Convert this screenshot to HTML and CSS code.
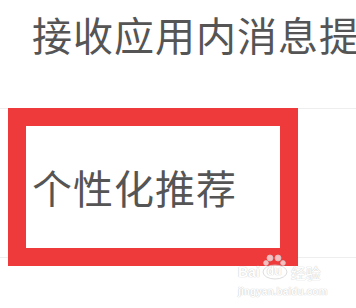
FILE: index.html
```html
<!DOCTYPE html>
<html lang="zh-CN">
<head>
  <meta charset="UTF-8">
  <title>个性化推荐</title>
  <meta name="viewport" content="width=device-width, initial-scale=1">
  <link rel="stylesheet" href="styles.css">
</head>
<body>

<div class="settings">
  <div class="item item-top">
    <span class="label">接收应用内消息提</span>
  </div>
  <div class="item item-main">
    <span class="label">个性化推荐</span>
  </div>

  <!-- annotation box drawn over the list -->
  <div class="mark"></div>

  <div class="watermark">
    <div class="wm-logo">
      <span class="wm-bai">Bai</span>
      <span class="wm-paw">
        <svg width="28" height="26" viewBox="0 0 28 26">
          <circle cx="9" cy="4" r="3"/>
          <circle cx="17" cy="4" r="3"/>
          <circle cx="5" cy="9" r="2.4"/>
          <circle cx="22" cy="9" r="2.4"/>
          <ellipse cx="14" cy="18" rx="12" ry="7"/>
        </svg>
        <span class="wm-du">du</span>
      </span>
      <span class="wm-jy">经验</span>
    </div>
    <div class="wm-url">jingyan.baidu.com</div>
  </div>
</div>

</body>
</html>
```

FILE: styles.css
```css
body {
  margin: 0;
  background-color: #fff;
  font-family: "Noto Sans CJK SC", "Noto Sans", sans-serif;
  color: #555;
  overflow: hidden;
}

.settings {
  position: relative;
  width: 356px;
  height: 308px;
}

.item {
  display: flex;
  padding-left: 32px;
  border-bottom: 1px solid #eee;
  white-space: nowrap;
  overflow: hidden;
}

.label {
  font-size: 40px;
  line-height: 1;
  letter-spacing: 1px;
}

.item-top {
  height: 109px;
  align-items: flex-start;
  padding-top: 14px;
  box-sizing: border-box;
}

.item-main {
  height: 149px;
  align-items: center;
  box-sizing: border-box;
  padding-top: 8px;
}

.mark {
  position: absolute;
  left: 8px;
  top: 108px;
  width: 290px;
  height: 158px;
  box-sizing: border-box;
  border: 18px solid #ef3a3c;
}

/* faint site watermark, bottom right */
.watermark {
  position: absolute;
  left: 238px;
  top: 252px;
  width: 92px;
  color: #fff;
  text-shadow: 0 0 1px #c8c8c8, 0 0 1px #c8c8c8;
  opacity: 0.9;
}

.wm-logo {
  display: flex;
  align-items: flex-end;
  height: 28px;
  font-family: "Liberation Sans", sans-serif;
  font-weight: bold;
  line-height: 1;
}

.wm-bai {
  font-size: 14px;
  margin-bottom: 1px;
}

.wm-paw {
  position: relative;
  width: 28px;
  height: 26px;
  margin-left: 1px;
}

.wm-paw svg {
  display: block;
  fill: rgba(255, 255, 255, 0.75);
  stroke: #d0d0d0;
  stroke-width: 0.8;
}

.wm-du {
  position: absolute;
  left: 6px;
  bottom: 3px;
  font-size: 12px;
}

.wm-jy {
  font-family: "Noto Sans CJK SC", sans-serif;
  font-weight: normal;
  font-size: 15px;
  margin-left: 2px;
}

.wm-url {
  margin-top: 6px;
  font-family: "Liberation Sans", sans-serif;
  font-weight: bold;
  font-size: 10px;
  letter-spacing: 0.1px;
}
```
